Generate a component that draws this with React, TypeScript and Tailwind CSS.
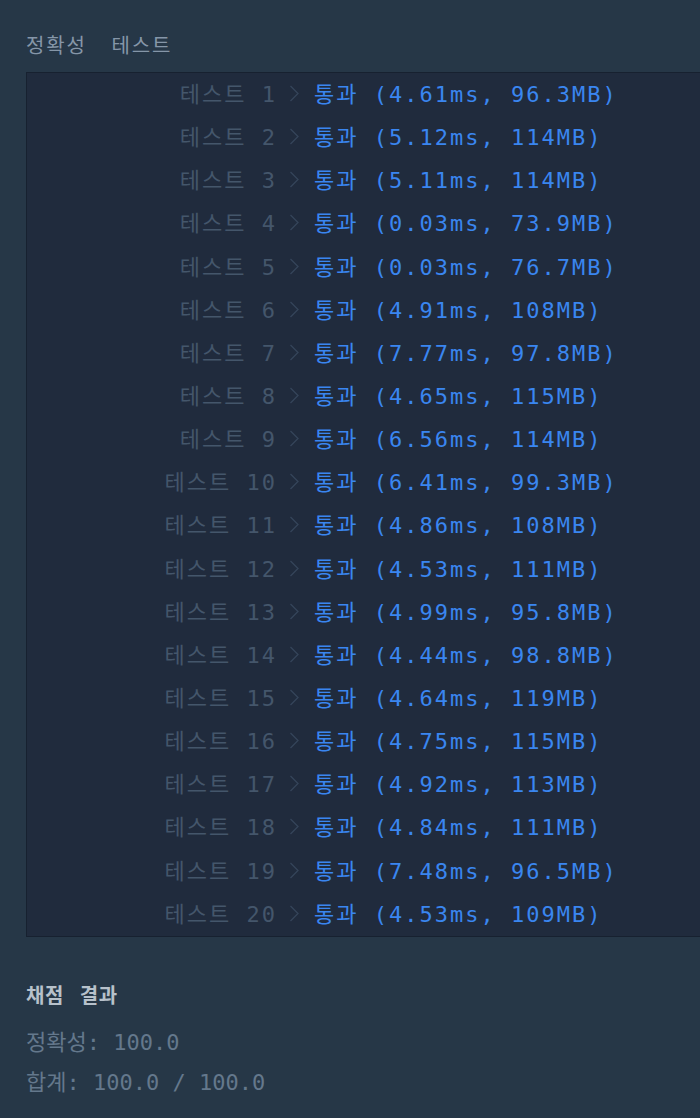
import React from "react";

const rows: [number, string][] = [
  [1, "4.61ms, 96.3MB"],
  [2, "5.12ms, 114MB"],
  [3, "5.11ms, 114MB"],
  [4, "0.03ms, 73.9MB"],
  [5, "0.03ms, 76.7MB"],
  [6, "4.91ms, 108MB"],
  [7, "7.77ms, 97.8MB"],
  [8, "4.65ms, 115MB"],
  [9, "6.56ms, 114MB"],
  [10, "6.41ms, 99.3MB"],
  [11, "4.86ms, 108MB"],
  [12, "4.53ms, 111MB"],
  [13, "4.99ms, 95.8MB"],
  [14, "4.44ms, 98.8MB"],
  [15, "4.64ms, 119MB"],
  [16, "4.75ms, 115MB"],
  [17, "4.92ms, 113MB"],
  [18, "4.84ms, 111MB"],
  [19, "7.48ms, 96.5MB"],
  [20, "4.53ms, 109MB"],
];

const mono = "font-['DejaVu_Sans_Mono','Noto_Sans_CJK_KR',monospace]";
const kr = "font-['Noto_Sans_CJK_KR',sans-serif]";

function Chevron() {
  return (
    <svg width="11" height="17" viewBox="0 0 11 17" className="ml-[12px] shrink-0">
      <polyline points="1.5,1 9,8.5 1.5,16" fill="none" stroke="#35455a" strokeWidth="1.3" />
    </svg>
  );
}

export default function App() {
  return (
    <div className="min-h-screen w-[700px] overflow-hidden bg-[#263747] pl-[26px] pt-[34px] pb-[16px]">
      <div className={`flex h-[22px] items-center gap-[25px] text-[20px] leading-[22px] tracking-[1.8px] text-[#8596a8] ${kr}`}>
        <span>정확성</span>
        <span>테스트</span>
      </div>
      <div className="mt-[16px] w-[700px] border border-[#172130] bg-[#202b3d]">
        {rows.map(([n, r]) => (
          <div key={n} className={`flex h-[43.15px] items-center pb-[2px] text-[22px] tracking-[2px] ${mono}`}>
            <div className="w-[250px] text-right text-[#44566b] whitespace-pre">
              <span className={kr}>테스트</span>
              {" " + n}
            </div>
            <Chevron />
            <div className="ml-[14px] text-[#3a86f0] whitespace-pre">
              <span className={kr}>통과</span>
              {" (" + r + ")"}
            </div>
          </div>
        ))}
      </div>
      <div className={`mt-[46px] h-[24px] leading-[24px] text-[20px] font-bold tracking-[0.5px] text-[#b7c1cb] ${kr}`}>
        <span>채점</span>
        <span className="ml-[16px]">결과</span>
      </div>
      <div className={`mt-[13px] h-[40px] leading-[40px] text-[22px] text-[#64788c] whitespace-pre ${mono}`}>
        <span className={kr}>정확성</span>
        {": 100.0"}
      </div>
      <div className={`h-[40px] leading-[40px] text-[22px] text-[#64788c] whitespace-pre ${mono}`}>
        <span className={kr}>합계</span>
        {": 100.0 / 100.0"}
      </div>
    </div>
  );
}
